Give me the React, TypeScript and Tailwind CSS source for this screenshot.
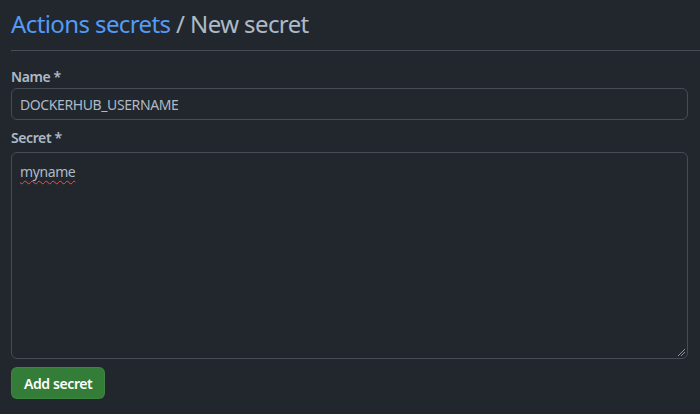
export default function App() {
  return (
    <div className="min-h-[414px] w-[700px] bg-[#22272e] pl-[11px] pr-[12px] font-['Noto_Sans','Open_Sans',sans-serif] text-[#adbac7]">
      {/* header */}
      <div className="-mr-[12px] flex h-[51px] items-end border-b border-[#444c56] pb-[8px]">
        <h1 className="text-[24px] leading-[36px] font-normal tracking-[-0.6px]">
          <span className="text-[#539bf5]">Actions secrets</span> / New secret
        </h1>
      </div>

      <form className="flex flex-col pt-[16px] tracking-[-0.4px]">
        <label className="text-[14px] leading-[20px] font-semibold">Name *</label>
        <div className="mt-[1px] flex h-[32px] items-center rounded-[6px] border border-[#444c56] bg-[#22272e] px-[8px] text-[14px]">
          DOCKERHUB_USERNAME
        </div>

        <label className="mt-[8px] text-[14px] leading-[20px] font-semibold">Secret *</label>
        <div className="relative mt-[4px] h-[207px] rounded-[6px] border border-[#444c56] bg-[#22272e] px-[8px] pt-[9px] text-[14px] leading-[20px]">
          <span className="underline decoration-wavy decoration-[#e5534b] decoration-[1px] underline-offset-[3px]">
            myname
          </span>
          <svg
            className="absolute right-[1px] bottom-[1px]"
            width="10"
            height="10"
            viewBox="0 0 10 10"
          >
            <path d="M9 2 L2 9 M9 5 L5 9" stroke="#8b949e" strokeWidth="1" />
          </svg>
        </div>

        <div className="mt-[8px]">
          <button
            type="button"
            className="h-[32px] rounded-[6px] border border-[#46954a66] bg-[#347d39] px-[12px] text-[14px] font-semibold text-white"
          >
            Add secret
          </button>
        </div>
      </form>
    </div>
  )
}
